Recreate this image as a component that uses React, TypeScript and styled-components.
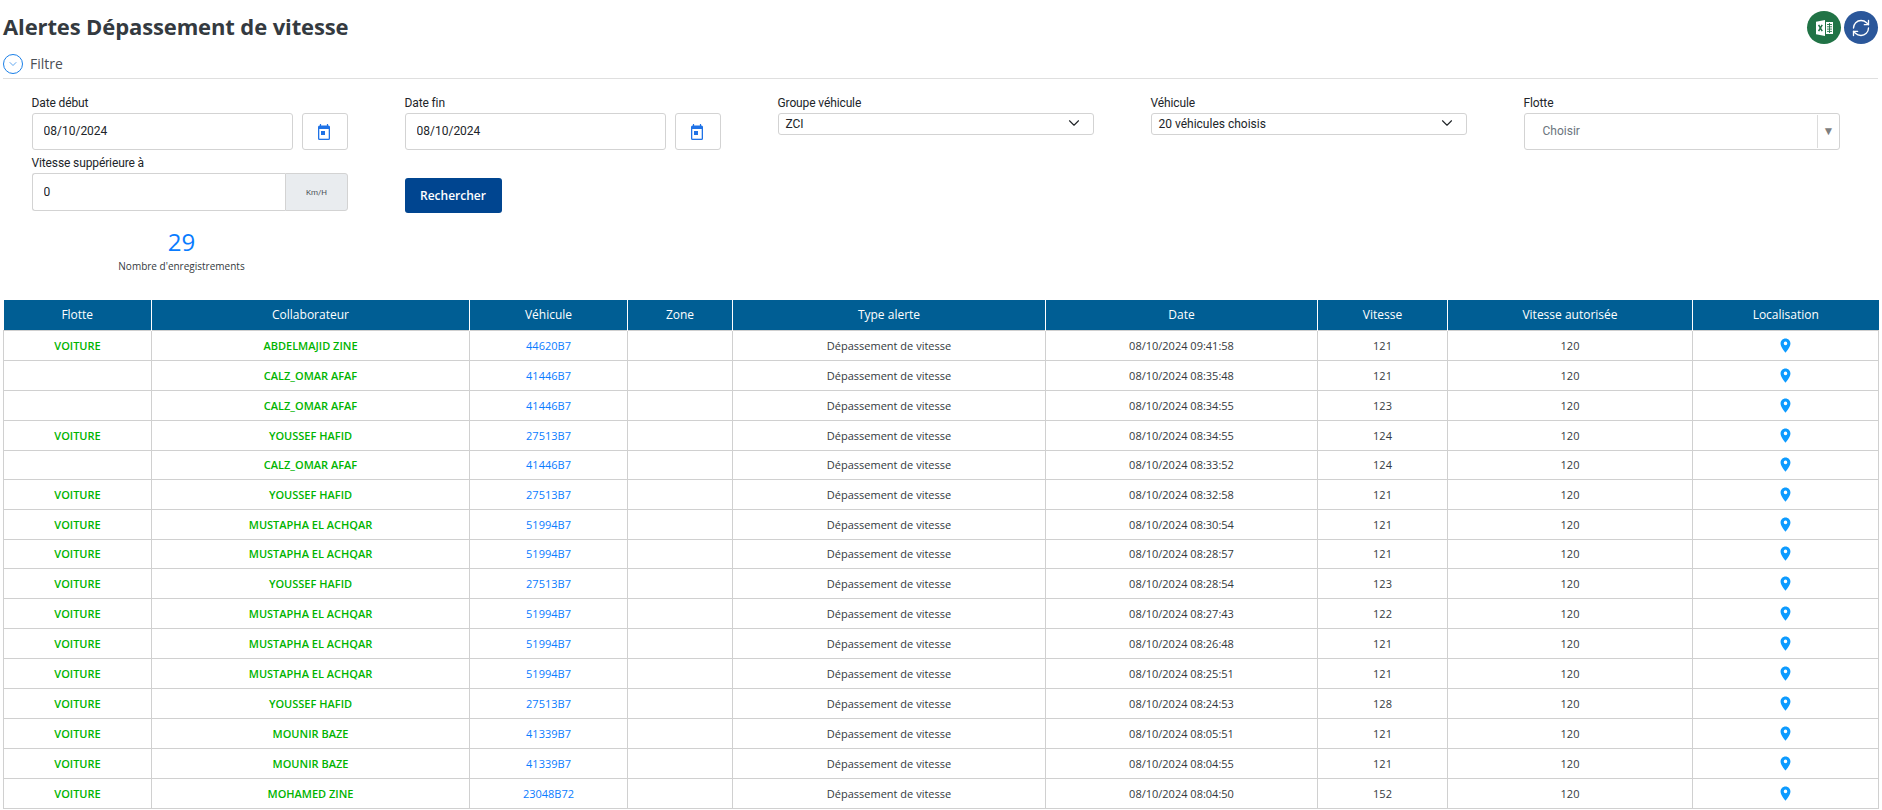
import React from 'react';
import styled, { createGlobalStyle } from 'styled-components';
import { MdPlace } from 'react-icons/md';
import { RefreshCw, ChevronDown } from 'lucide-react';

const GlobalStyle = createGlobalStyle`
  html, body {
    margin: 0;
    padding: 0;
    background: #fff;
    overflow: hidden;
  }
  * { box-sizing: border-box; }
`;

const Page = styled.div`
  width: 1882px;
  height: 810px;
  overflow: hidden;
  padding: 0 4px 0 3px;
  font-family: 'Open Sans', sans-serif;
  color: #343a40;
`;

const TitleBar = styled.div`
  height: 54px;
  display: flex;
  justify-content: space-between;
  align-items: flex-start;
`;

const Title = styled.h1`
  margin: 10px 0 0;
  font-size: 22px;
  line-height: 32px;
  font-weight: 700;
  letter-spacing: -0.12px;
  color: #343a40;
`;

const Actions = styled.div`
  display: flex;
  gap: 3px;
  margin-top: 11px;
`;

const RoundButton = styled.button<{ $bg: string }>`
  width: 34px;
  height: 33px;
  padding: 0;
  border: 0;
  border-radius: 50%;
  background: ${(p) => p.$bg};
  color: #fff;
  display: flex;
  align-items: center;
  justify-content: center;
`;

const FilterToggle = styled.div`
  height: 25px;
  display: flex;
  align-items: flex-start;
  gap: 7px;
  border-bottom: 1px solid #dfdfdf;
  font-size: 14px;
  line-height: 20px;
  color: #4a4f55;
`;

const ToggleCircle = styled.span`
  width: 20px;
  height: 20px;
  border: 1px solid #1a7fe8;
  border-radius: 50%;
  display: flex;
  align-items: center;
  justify-content: center;
  color: #1a7fe8;
`;

const FormGrid = styled.div`
  display: grid;
  grid-template-columns: repeat(5, 373px);
  margin-left: 13.5px;
  padding-top: 16px;
  row-gap: 5px;
  font-family: 'Roboto', sans-serif;
`;

const Field = styled.div`
  padding: 0 41.5px 0 15px;
`;

const Label = styled.label`
  display: block;
  height: 18px;
  font-size: 12px;
  line-height: 17px;
  letter-spacing: -0.12px;
  color: #212529;
`;

const InputRow = styled.div`
  display: flex;
`;

const TextInput = styled.input`
  flex: 1;
  min-width: 0;
  height: 37px;
  padding: 0 11px 2px;
  border: 1px solid #d3d3d3;
  border-radius: 3px;
  font-family: 'Roboto', sans-serif;
  font-size: 12px;
  color: #212529;
  background: #fff;
`;

const CalendarButton = styled.button`
  width: 46px;
  height: 37px;
  margin-left: 9px;
  padding: 0 3px 0 0;
  border: 1px solid #d3d3d3;
  border-radius: 3px;
  background: #fff;
  display: flex;
  align-items: center;
  justify-content: center;
`;

const SpeedInput = styled(TextInput)`
  height: 38px;
  padding-bottom: 0;
  border-radius: 3px 0 0 3px;
  border-right: 0;
`;

const Unit = styled.span`
  width: 63px;
  height: 38px;
  background: #e9ecef;
  border: 1px solid #d3d3d3;
  border-radius: 0 3px 3px 0;
  display: flex;
  align-items: center;
  justify-content: center;
  font-size: 8px;
  color: #495057;
`;

const Dropdown = styled.div`
  height: 22px;
  padding: 0 10px 0 7px;
  border: 1px solid #d3d3d3;
  border-radius: 3px;
  background: #fff;
  display: flex;
  align-items: center;
  justify-content: space-between;
  font-size: 12px;
  color: #212529;
  svg { margin-top: -3px; }
`;

const Combo = styled.div`
  height: 37px;
  border: 1px solid #d3d3d3;
  border-radius: 3px;
  background: #fff;
  display: flex;
  align-items: center;
  justify-content: space-between;
  padding: 0 0 2px 18px;
  font-size: 12px;
  color: #6c757d;
`;

const ComboArrow = styled.span`
  width: 22px;
  height: 33px;
  margin-top: 1px;
  border-left: 1px solid #dcdcdc;
  display: flex;
  align-items: center;
  justify-content: center;
  color: #7f7f7f;
  font-size: 12px;
`;

const SearchCell = styled.div`
  padding: 23px 15px 0;
`;

const SearchButton = styled.button`
  width: 97px;
  height: 35px;
  border: 0;
  border-radius: 3px;
  background: #004590;
  color: #fff;
  font-family: 'Open Sans', sans-serif;
  font-size: 12px;
  font-weight: 600;
`;

const Stat = styled.div`
  width: 323px;
  margin: 12px 0 0 17px;
  height: 55px;
  text-align: center;
`;

const StatValue = styled.div`
  font-size: 24px;
  line-height: 33px;
  color: #0a7cff;
`;

const StatLabel = styled.div`
  font-size: 10px;
  line-height: 16px;
  color: #343a40;
`;

const Table = styled.table`
  width: 1875px;
  margin-top: 20px;
  table-layout: fixed;
  border-collapse: collapse;
  font-size: 11px;
  text-align: center;
`;

const HeadCell = styled.th`
  height: 30px;
  padding: 0;
  background: #005e94;
  color: #fff;
  font-weight: 400;
  font-size: 12px;
  border-left: 1px solid #fff;
  border-right: 1px solid #fff;
  &:first-child { border-left: 0; }
  &:last-child { border-right: 0; }
`;

// the reference has a 29px row now and then, 16 rows make 478px
const Row = styled.tr<{ $short: boolean }>`
  height: ${(p) => (p.$short ? 29 : 30)}px;
`;

const Cell = styled.td<{ $tone?: 'green' | 'blue' }>`
  padding: 0;
  border: 1px solid #d0d0d0;
  color: ${(p) => (p.$tone === 'green' ? '#00b400' : p.$tone === 'blue' ? '#0a7cff' : '#343a40')};
  font-weight: ${(p) => (p.$tone === 'green' ? 600 : 400)};
`;

const PinIcon = styled(MdPlace)`
  display: block;
  margin: 0 auto;
  color: #0d9bff;
`;

const ExcelIcon = () => (
  <svg width="17" height="16" viewBox="0 0 17 16">
    <path d="M0 1.8 L9 0 V16 L0 14.2 Z" fill="#fff" />
    <path d="M2.6 4.8 L6.2 11.2 M6.2 4.8 L2.6 11.2" stroke="#217346" strokeWidth="1.5" />
    <path d="M10 2 H17 V14 H10 Z" fill="#fff" />
    <path
      d="M11 4.5 H16 M11 6.8 H16 M11 9.1 H16 M11 11.4 H16 M13.5 3 V13"
      stroke="#217346"
      strokeWidth="0.9"
    />
  </svg>
);

const CalendarIcon = () => (
  <svg width="12" height="16" viewBox="0 0 12 16" fill="none">
    <path d="M2.5 0 V2 M9.5 0 V2" stroke="#1f72e6" strokeWidth="1.2" />
    <path
      d="M1.5 1.5 H10.5 A1.5 1.5 0 0 1 12 3 V14.5 A1.5 1.5 0 0 1 10.5 16 H1.5 A1.5 1.5 0 0 1 0 14.5 V3 A1.5 1.5 0 0 1 1.5 1.5 Z"
      fill="#1f72e6"
    />
    <rect x="1.3" y="5" width="9.4" height="9.7" fill="#fff" />
    <rect x="3" y="7" width="4" height="4" fill="#1f72e6" />
  </svg>
);

const columns = [
  { title: 'Flotte', width: 148 },
  { title: 'Collaborateur', width: 318 },
  { title: 'Véhicule', width: 158 },
  { title: 'Zone', width: 105 },
  { title: 'Type alerte', width: 313 },
  { title: 'Date', width: 272 },
  { title: 'Vitesse', width: 130 },
  { title: 'Vitesse autorisée', width: 245 },
  { title: 'Localisation', width: 186 },
];

const rows = [
  ['VOITURE', 'ABDELMAJID ZINE', '44620B7', '08/10/2024 09:41:58', '121'],
  ['', 'CALZ_OMAR AFAF', '41446B7', '08/10/2024 08:35:48', '121'],
  ['', 'CALZ_OMAR AFAF', '41446B7', '08/10/2024 08:34:55', '123'],
  ['VOITURE', 'YOUSSEF HAFID', '27513B7', '08/10/2024 08:34:55', '124'],
  ['', 'CALZ_OMAR AFAF', '41446B7', '08/10/2024 08:33:52', '124'],
  ['VOITURE', 'YOUSSEF HAFID', '27513B7', '08/10/2024 08:32:58', '121'],
  ['VOITURE', 'MUSTAPHA EL ACHQAR', '51994B7', '08/10/2024 08:30:54', '121'],
  ['VOITURE', 'MUSTAPHA EL ACHQAR', '51994B7', '08/10/2024 08:28:57', '121'],
  ['VOITURE', 'YOUSSEF HAFID', '27513B7', '08/10/2024 08:28:54', '123'],
  ['VOITURE', 'MUSTAPHA EL ACHQAR', '51994B7', '08/10/2024 08:27:43', '122'],
  ['VOITURE', 'MUSTAPHA EL ACHQAR', '51994B7', '08/10/2024 08:26:48', '121'],
  ['VOITURE', 'MUSTAPHA EL ACHQAR', '51994B7', '08/10/2024 08:25:51', '121'],
  ['VOITURE', 'YOUSSEF HAFID', '27513B7', '08/10/2024 08:24:53', '128'],
  ['VOITURE', 'MOUNIR BAZE', '41339B7', '08/10/2024 08:05:51', '121'],
  ['VOITURE', 'MOUNIR BAZE', '41339B7', '08/10/2024 08:04:55', '121'],
  ['VOITURE', 'MOHAMED ZINE', '23048B72', '08/10/2024 08:04:50', '152'],
];

export default function App() {
  return (
    <Page>
      <GlobalStyle />
      <TitleBar>
        <Title>Alertes Dépassement de vitesse</Title>
        <Actions>
          <RoundButton $bg="#217346">
            <ExcelIcon />
          </RoundButton>
          <RoundButton $bg="#2b579a">
            <RefreshCw size={20} strokeWidth={1.6} />
          </RoundButton>
        </Actions>
      </TitleBar>
      <FilterToggle>
        <ToggleCircle>
          <ChevronDown size={12} strokeWidth={1.4} />
        </ToggleCircle>
        Filtre
      </FilterToggle>
      <FormGrid>
        <Field>
          <Label>Date début</Label>
          <InputRow>
            <TextInput readOnly value="08/10/2024" />
            <CalendarButton>
              <CalendarIcon />
            </CalendarButton>
          </InputRow>
        </Field>
        <Field>
          <Label>Date fin</Label>
          <InputRow>
            <TextInput readOnly value="08/10/2024" />
            <CalendarButton>
              <CalendarIcon />
            </CalendarButton>
          </InputRow>
        </Field>
        <Field>
          <Label>Groupe véhicule</Label>
          <Dropdown>
            ZCI
            <ChevronDown size={18} strokeWidth={1.5} />
          </Dropdown>
        </Field>
        <Field>
          <Label>Véhicule</Label>
          <Dropdown>
            20 véhicules choisis
            <ChevronDown size={18} strokeWidth={1.5} />
          </Dropdown>
        </Field>
        <Field>
          <Label>Flotte</Label>
          <Combo>
            Choisir
            <ComboArrow>▼</ComboArrow>
          </Combo>
        </Field>
        <Field>
          <Label>Vitesse suppérieure à</Label>
          <InputRow>
            <SpeedInput readOnly value="0" />
            <Unit>Km/H</Unit>
          </InputRow>
        </Field>
        <SearchCell>
          <SearchButton>Rechercher</SearchButton>
        </SearchCell>
      </FormGrid>
      <Stat>
        <StatValue>29</StatValue>
        <StatLabel>Nombre d'enregistrements</StatLabel>
      </Stat>
      <Table>
        <colgroup>
          {columns.map((c) => (
            <col key={c.title} width={c.width} />
          ))}
        </colgroup>
        <thead>
          <tr>
            {columns.map((c) => (
              <HeadCell key={c.title}>{c.title}</HeadCell>
            ))}
          </tr>
        </thead>
        <tbody>
          {rows.map((r, i) => (
            <Row key={i} $short={i === 4 || i === 7}>
              <Cell $tone="green">{r[0]}</Cell>
              <Cell $tone="green">{r[1]}</Cell>
              <Cell $tone="blue">{r[2]}</Cell>
              <Cell />
              <Cell>Dépassement de vitesse</Cell>
              <Cell>{r[3]}</Cell>
              <Cell>{r[4]}</Cell>
              <Cell>120</Cell>
              <Cell>
                <PinIcon size={17} />
              </Cell>
            </Row>
          ))}
        </tbody>
      </Table>
    </Page>
  );
}
